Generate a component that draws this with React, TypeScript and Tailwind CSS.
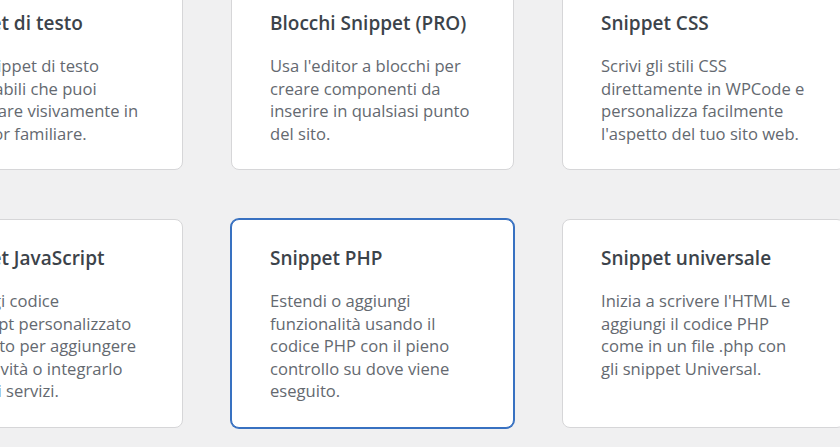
import { clsx } from 'clsx'

type Snippet = {
  title: string
  lines: string[]
  active?: boolean
}

const snippets: Snippet[] = [
  {
    title: 'Snippet di testo',
    lines: ['Crea snippet di testo', 'riutilizzabili che puoi', 'formattare visivamente in', 'un editor familiare.'],
  },
  {
    title: 'Blocchi Snippet (PRO)',
    lines: ['Usa l\'editor a blocchi per', 'creare componenti da', 'inserire in qualsiasi punto', 'del sito.'],
  },
  {
    title: 'Snippet CSS',
    lines: ['Scrivi gli stili CSS', 'direttamente in WPCode e', 'personalizza facilmente', 'l\'aspetto del tuo sito web.'],
  },
  {
    title: 'Snippet JavaScript',
    lines: ['Aggiungi codice', 'JavaScript personalizzato', 'al tuo sito per aggiungere', 'interattività o integrarlo', 'con altri servizi.'],
  },
  {
    title: 'Snippet PHP',
    lines: ['Estendi o aggiungi', 'funzionalità usando il', 'codice PHP con il pieno', 'controllo su dove viene', 'eseguito.'],
    active: true,
  },
  {
    title: 'Snippet universale',
    lines: ['Inizia a scrivere l\'HTML e', 'aggiungi il codice PHP', 'come in un file .php con', 'gli snippet Universal.'],
  },
]

function SnippetCard({ title, lines, active }: Snippet) {
  return (
    <div
      className={clsx(
        'rounded-lg border bg-white px-[38px] pt-[26px] pb-[24px]',
        active ? 'border-[#3871c1] ring-1 ring-[#3871c1]' : 'border-[#d6d6d8]',
      )}
    >
      <h3 className="whitespace-nowrap text-[19px] leading-[24px] font-semibold text-[#3c434a]">{title}</h3>
      <p className="mt-[20px] whitespace-nowrap text-[16.6px] leading-[22.5px] text-[#646970]">
        {lines.map((line, i) => (
          <span key={i} className="block">
            {line}
          </span>
        ))}
      </p>
    </div>
  )
}

export default function App() {
  return (
    <div
      className="h-[447px] w-[840px] overflow-hidden bg-[#f0f0f1]"
      style={{ fontFamily: '"Segoe UI", "Open Sans", "Noto Sans", sans-serif' }}
    >
      <div className="-mt-[16px] -ml-[100px] grid w-[945px] grid-cols-[283px_283px_283px] gap-x-[48px] gap-y-[49px]">
        {snippets.map((s) => (
          <SnippetCard key={s.title} {...s} />
        ))}
      </div>
    </div>
  )
}
